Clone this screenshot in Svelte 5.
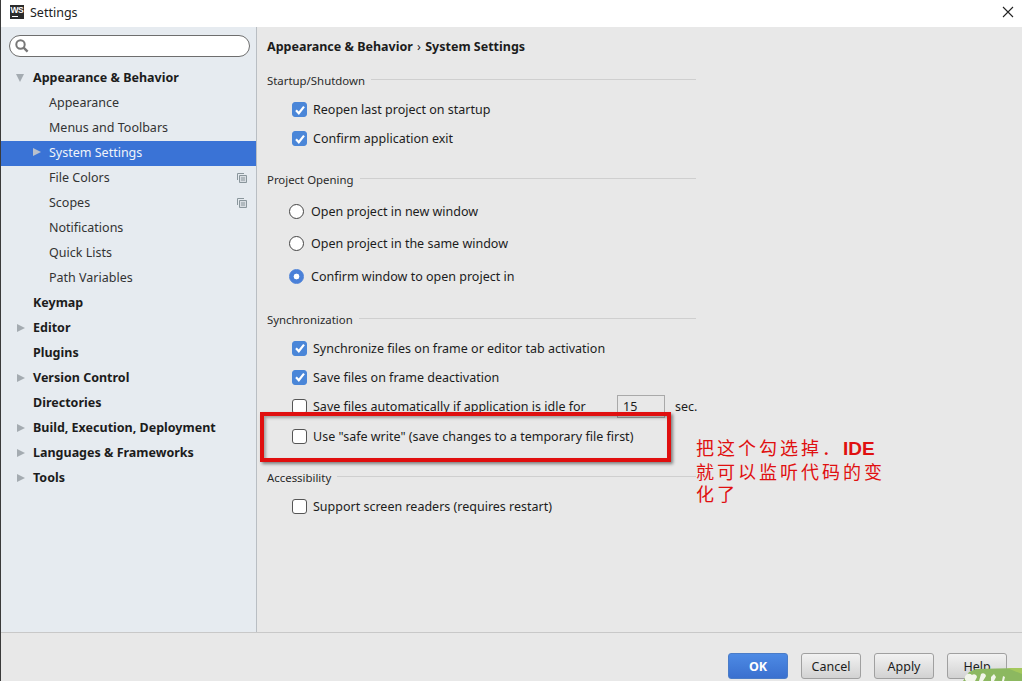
<script>
  const tree = [
    { label: 'Appearance & Behavior', bold: true, arrow: 'down' },
    { label: 'Appearance', sub: true },
    { label: 'Menus and Toolbars', sub: true },
    { label: 'System Settings', sub: true, selected: true, arrow: 'right' },
    { label: 'File Colors', sub: true, copy: true },
    { label: 'Scopes', sub: true, copy: true },
    { label: 'Notifications', sub: true },
    { label: 'Quick Lists', sub: true },
    { label: 'Path Variables', sub: true },
    { label: 'Keymap', bold: true },
    { label: 'Editor', bold: true, arrow: 'right' },
    { label: 'Plugins', bold: true },
    { label: 'Version Control', bold: true, arrow: 'right' },
    { label: 'Directories', bold: true },
    { label: 'Build, Execution, Deployment', bold: true, arrow: 'right' },
    { label: 'Languages & Frameworks', bold: true, arrow: 'right' },
    { label: 'Tools', bold: true, arrow: 'right' }
  ];
</script>

{#snippet check(on, label)}
  <div class="opt">
    <span class="box" class:on>
      {#if on}
        <svg width="14" height="14" viewBox="0 0 14 14"><path d="M3 7.2l2.8 3L11 3.6" fill="none" stroke="#fff" stroke-width="2.2"/></svg>
      {/if}
    </span>
    <span>{label}</span>
  </div>
{/snippet}

{#snippet radio(on, label)}
  <div class="opt radio-opt">
    <span class="radio" class:on></span>
    <span>{label}</span>
  </div>
{/snippet}

<div class="win">
  <header class="title">
    <span class="logo"><b>WS</b><i></i></span>
    <span class="title-text">Settings</span>
    <svg class="close" width="12" height="12" viewBox="0 0 12 12"><path d="M1 1l10 10M11 1L1 11" stroke="#222" stroke-width="1.1"/></svg>
  </header>
  <div class="main">
    <aside class="side">
      <div class="search">
        <svg width="16" height="16" viewBox="0 0 16 16"><circle cx="6.5" cy="6.5" r="4.2" fill="none" stroke="#777" stroke-width="2"/><path d="M9.6 9.6l4 4" stroke="#777" stroke-width="2.4"/></svg>
      </div>
      <nav class="tree">
        {#each tree as t}
          <div class="row" class:sub={t.sub} class:bold={t.bold} class:selected={t.selected}>
            {#if t.arrow === 'down'}
              <span class="arrow down"></span>
            {:else if t.arrow === 'right'}
              <span class="arrow right"></span>
            {/if}
            <span>{t.label}</span>
            {#if t.copy}
              <svg class="copy" width="10" height="10" viewBox="0 0 10 10"><path d="M2.5 2.5h7v7h-7z" fill="#d8dde2" stroke="#8a969c"/><path d="M.5 7V.5H7" fill="none" stroke="#8a969c"/><path d="M4 5h4M4 7h4" stroke="#8a969c"/></svg>
            {/if}
          </div>
        {/each}
      </nav>
    </aside>
    <section class="content">
      <h1>Appearance &amp; Behavior <span class="sep">›</span> System Settings</h1>

      <div class="group g1">
        <div class="legend"><span>Startup/Shutdown</span><i></i></div>
        {@render check(true, 'Reopen last project on startup')}
        {@render check(true, 'Confirm application exit')}
      </div>

      <div class="group g2">
        <div class="legend"><span>Project Opening</span><i></i></div>
        {@render radio(false, 'Open project in new window')}
        {@render radio(false, 'Open project in the same window')}
        {@render radio(true, 'Confirm window to open project in')}
      </div>

      <div class="group g3">
        <div class="legend"><span>Synchronization</span><i></i></div>
        {@render check(true, 'Synchronize files on frame or editor tab activation')}
        {@render check(true, 'Save files on frame deactivation')}
        <div class="opt idle">
          <span class="box"></span>
          <span class="idle-label">Save files automatically if application is idle for</span>
          <span class="num">15</span>
          <span>sec.</span>
        </div>
        <div class="safe">
          {@render check(false, 'Use "safe write" (save changes to a temporary file first)')}
          <div class="highlight"></div>
        </div>
      </div>

      <div class="group g4">
        <div class="legend"><span>Accessibility</span><i></i></div>
        {@render check(false, 'Support screen readers (requires restart)')}
      </div>

      <p class="note">把这个勾选掉．<b>IDE</b><br />就可以监听代码的变<br />化了</p>
    </section>
  </div>
  <footer class="foot">
    <button class="ok">OK</button>
    <button>Cancel</button>
    <button>Apply</button>
    <button>Help</button>
    <svg class="corner" width="59" height="13" viewBox="0 0 59 13">
      <path d="M0 13L6 4 13 1 59 0v13z" fill="#8cb860"/>
      <path d="M44 0h15v6z" fill="#a4c85c"/>
      <path d="M3 13a4 4 0 016-6 3 3 0 015 2l-2 4zM18 6a3 3 0 015 2l-3 5h-4zM28 9l3-3 2 3-2 4h-3zM40 8l2 1-1 4h-2z" fill="#f2f5ea"/>
    </svg>
  </footer>
</div>

<style>
  :global(body) { margin: 0; background: #e8e8e8; }
  .win {
    width: 1022px; height: 681px; display: flex; flex-direction: column; overflow: hidden;
    box-sizing: border-box; border-left: 1px solid #3a3a3a;
    font: 12.5px "Noto Sans", "Noto Sans CJK SC", sans-serif; color: #1c1c1c;
  }
  .title { height: 27px; flex: none; background: #fff; display: flex; align-items: center; position: relative; padding-left: 9px; }
  .logo { width: 14px; height: 14px; background: #2b2b2b; color: #fff; display: block; position: relative; margin-right: 6px; margin-top: -4px; }
  .logo b { position: absolute; left: .5px; top: 1px; font: bold 8.5px/8px "Liberation Sans", sans-serif; letter-spacing: -.4px; }
  .logo i { position: absolute; left: 2px; top: 11px; width: 6px; height: 1px; background: #fff; }
  .title-text { font-size: 12.5px; color: #222; margin-top: -3px; }
  .close { position: absolute; right: 8px; top: 6px; }
  .main { flex: 1; display: flex; min-height: 0; }
  .side { width: 255px; flex: none; background: #e6ebf0; border-right: 1px solid #b9bec3; padding-top: 8px; box-sizing: content-box; }
  .search { height: 20px; margin: 0 6px 0 8px; border: 1px solid #6e6e6e; border-radius: 11px; background: #fff; display: flex; align-items: center; padding-left: 4px; }
  .tree { margin-top: 9px; }
  .row { height: 25px; box-sizing: border-box; padding-bottom: 2px; display: flex; align-items: center; position: relative; padding-left: 32px; }
  .row.sub { padding-left: 48px; color: #333; }
  .row.bold { font-weight: 700; color: #1c1c1c; font-size: 12.5px; }
  .row.selected { background: #3a73d6; color: #f0f4fa; }
  .arrow { position: absolute; width: 0; height: 0; }
  .arrow.down { left: 15px; top: 8px; border: 4.5px solid transparent; border-top: 8px solid #a4abb1; border-bottom: 0; }
  .arrow.right { left: 16px; top: 8px; border: 4.5px solid transparent; border-left: 8px solid #a4abb1; border-right: 0; }
  .row.sub .arrow.right { left: 32px; top: 7px; border-left-color: #b8c0cc; }
  .copy { position: absolute; left: 236px; top: 7px; }
  .content { flex: 1; position: relative; padding-left: 10px; min-width: 0; }
  h1 { margin: 0; font-size: 12.5px; line-height: 17px; font-weight: 700; padding-top: 11px; color: #1c1c1c; }
  .sep { font-weight: 400; margin: 0 1px; }
  .group { width: 429px; }
  .g1 { margin-top: 17px; }
  .g2 { margin-top: 18px; }
  .g3 { margin-top: 18px; }
  .g4 { margin-top: 18px; }
  .legend { display: flex; align-items: center; height: 17px; font-size: 11.4px; color: #2a2a2a; }
  .legend i { flex: 1; height: 1px; background: #cfcfcf; margin-left: 6px; margin-top: -2px; }
  .opt { height: 29px; display: flex; align-items: center; padding-left: 25px; color: #1c1c1c; }
  .radio-opt { height: 32.5px; padding-left: 22px; }
  .g2 .legend { margin-bottom: 7px; }
  .g1 .legend + .opt, .g3 .legend + .opt, .g4 .legend + .opt { margin-top: 6px; }
  .box { width: 13px; height: 13px; border: 1px solid #555; border-radius: 3px; background: #fff; margin-right: 6px; display: block; flex: none; }
  .box.on { background: #4a86d8; border-color: #4a86d8; }
  .box svg { display: block; margin: -.5px; }
  .radio { width: 13px; height: 13px; border: 1px solid #444; border-radius: 50%; background: #fff; margin-right: 7px; flex: none; box-sizing: content-box; }
  .radio.on { background: radial-gradient(circle, #fff 0 2.6px, #4a80d8 3.2px); border-color: #4a80d8; }
  .idle-label { width: 304px; flex: none; }
  .num { height: 21px; border: 1px solid #a9a9a9; background: #e8e8e8; line-height: 21px; padding-left: 5px; margin-right: 10px; box-sizing: content-box; width: 41px; flex: none; }
  .num + span { flex: none; }
  .idle { width: 445px; box-sizing: border-box; }
  .safe { position: relative; padding-top: 1px; }
  .highlight { position: absolute; left: -7px; top: -9px; width: 403px; height: 42px; border: 4px solid #e00f0f; box-shadow: 2px 2px 3px rgba(0,0,0,.45), inset 2px 2px 3px rgba(0,0,0,.3); }
  .note { position: absolute; left: 439px; top: 409px; margin: 0; font-size: 18px; line-height: 22px; letter-spacing: 3px; color: #e01010; font-family: "Noto Sans CJK SC", sans-serif; }
  .note b { font-family: "Liberation Sans", sans-serif; font-weight: 700; font-size: 19px; letter-spacing: 0; }
  .foot { height: 49px; box-sizing: border-box; flex: none; border-top: 1px solid #c8c8c8; display: flex; justify-content: flex-end; gap: 13px; padding: 20px 15px 0 0; position: relative; }
  button { width: 60px; height: 26px; box-sizing: border-box; border: 1px solid #a0a0a0; border-radius: 3px; background: linear-gradient(#f2f2f2, #d2d2d2); font: 12.5px "Noto Sans", sans-serif; color: #1c1c1c; padding: 0; }
  button.ok { background: linear-gradient(#4d8ae4, #3a70cf); border-color: #4a7cc8; color: #fff; font-weight: 700; }
  .corner { position: absolute; right: 0; bottom: 0; }
</style>
